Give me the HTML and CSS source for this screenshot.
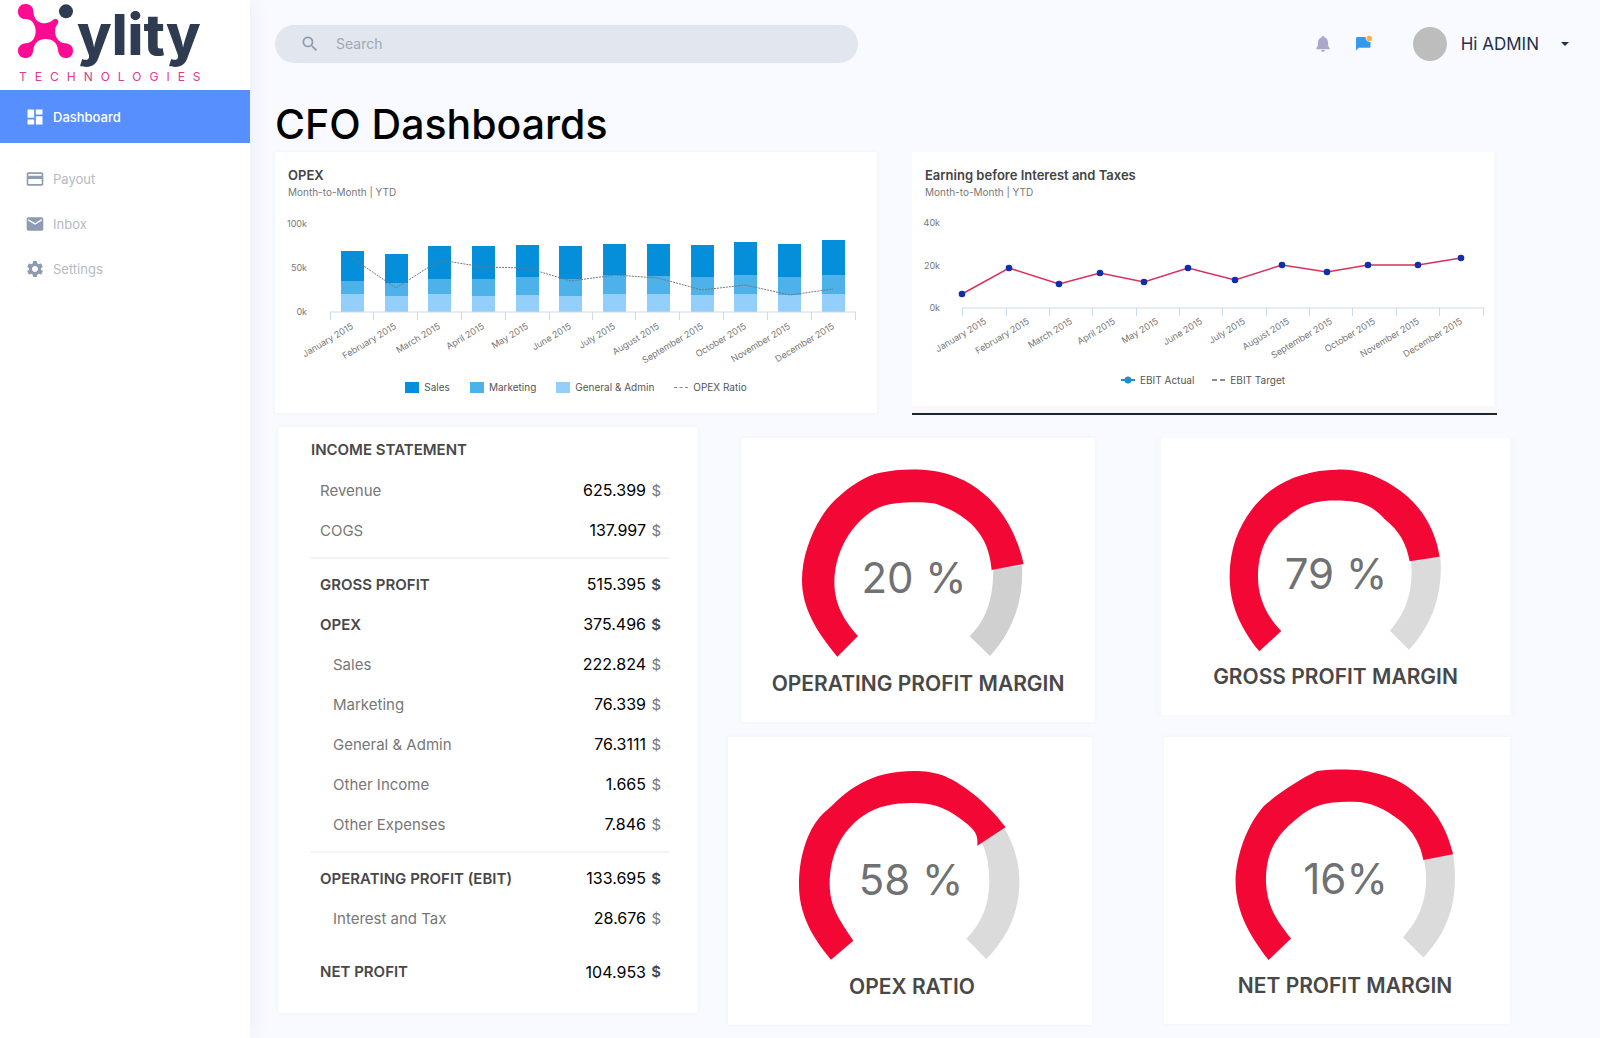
FILE: index.html
```html
<!DOCTYPE html>
<html lang="en">
<head>
<meta charset="utf-8">
<meta name="viewport" content="width=device-width, initial-scale=1">
<title>CFO Dashboards</title>
<link rel="stylesheet" href="styles.css">
</head>
<body>
<div class="app">
  <aside class="sidebar">
    <a class="logo" href="#" aria-label="Xylity Technologies">
      <svg width="250" height="90" viewBox="0 0 250 90">
        <g transform="scale(.3333)">
          <path fill="#ff0a93" d="M100 35C100 18 88 12 76 12C62 12 54 22 54 35C54 50 64 57 78 57C92 57 105 68 107 92C107 115 95 128 78 130C62 132 54 140 54 152C54 166 64 174 78 174C90 174 98 166 100 150C102 130 115 117 137 117C160 117 172 130 174 150C176 166 184 174 197 174C210 174 219 166 219 152C219 138 210 132 196 130C175 128 165 110 165 92C165 82 170 76 174 70C178 62 170 54 162 58C155 63 150 68 137 70C115 70 102 58 100 35Z"/>
          <circle cx="198" cy="34" r="21" fill="#2f3b50"/>
        </g>
        <text class="logo-name" x="77" y="55">ylity</text>
        <text class="logo-tag" x="19" y="81">TECHNOLOGIES</text>
      </svg>
    </a>
    <nav class="nav">
      <a class="nav-item active" href="#"><svg viewBox="0 0 24 24"><path d="M3 13h8V3H3v10zm0 8h8v-6H3v6zm10 0h8V11h-8v10zm0-18v6h8V3h-8z"/></svg>Dashboard</a>
      <a class="nav-item" href="#"><svg viewBox="0 0 24 24"><path d="M20 4H4c-1.11 0-1.99.89-1.99 2L2 18c0 1.11.89 2 2 2h16c1.11 0 2-.89 2-2V6c0-1.11-.89-2-2-2zm0 14H4v-6h16v6zm0-10H4V6h16v2z"/></svg>Payout</a>
      <a class="nav-item" href="#"><svg viewBox="0 0 24 24"><path d="M20 4H4c-1.1 0-1.99.9-1.99 2L2 18c0 1.100.9 2 2 2h16c1.100 0 2-.9 2-2V6c0-1.100-.9-2-2-2zm0 4l-8 5-8-5V6l8 5 8-5v2z"/></svg>Inbox</a>
      <a class="nav-item" href="#"><svg viewBox="0 0 24 24"><path d="M19.140 12.940c.04-.3.06-.61.06-.94 0-.32-.02-.64-.07-.94l2.030-1.580c.18-.14.23-.41.12-.61l-1.920-3.320c-.12-.22-.37-.29-.59-.22l-2.390.96c-.5-.38-1.030-.7-1.620-.94l-.36-2.540c-.04-.24-.24-.41-.48-.41h-3.840c-.24 0-.43.17-.47.41l-.36 2.540c-.59.24-1.130.57-1.620.94l-2.390-.96c-.22-.08-.47 0-.59.22L2.740 8.870c-.12.21-.08.47.12.61l2.030 1.580c-.05.3-.09.63-.09.94s.02.64.07.94l-2.030 1.580c-.18.14-.23.41-.12.61l1.920 3.320c.12.22.37.29.59.22l2.390-.96c.5.38 1.030.7 1.620.94l.36 2.540c.05.24.24.41.48.41h3.840c.24 0 .44-.17.47-.41l.36-2.540c.59-.24 1.130-.56 1.620-.94l2.390.96c.22.08.47 0 .59-.22l1.920-3.320c.12-.22.07-.47-.12-.61l-2.010-1.580zM12 15.600c-1.980 0-3.600-1.620-3.600-3.600s1.620-3.600 3.600-3.600 3.600 1.620 3.600 3.600-1.620 3.600-3.600 3.600z"/></svg>Settings</a>
    </nav>
  </aside>

  <main class="main">
    <header class="topbar">
      <label class="search">
        <svg viewBox="0 0 24 24"><path d="M15.500 14h-.79l-.28-.27A6.471 6.471 0 0 0 16 9.500 6.500 6.500 0 1 0 9.500 16c1.610 0 3.090-.59 4.230-1.570l.27.28v.79l5 4.990L20.490 19l-4.990-5zm-6 0C7.010 14 5 11.990 5 9.500S7.010 5 9.500 5 14 7.010 14 9.500 11.990 14 9.500 14z"/></svg>
        <input type="search" placeholder="Search" aria-label="Search">
      </label>
      <div class="actions">
        <button class="icon-btn" type="button" aria-label="Notifications"><svg viewBox="0 0 20 20"><path fill="#a9a8cc" d="M10 2c.8 0 1.300.5 1.300 1.200C13.800 3.800 15 5.900 15 8.500c0 3.500.6 4.500 1.700 5.600v1.100H3.300v-1.100C4.400 13 5 12 5 8.500c0-2.600 1.200-4.700 3.700-5.300C8.700 2.500 9.200 2 10 2zM8.200 16h3.600c0 1.200-.8 2-1.800 2s-1.800-.8-1.800-2z"/></svg></button>
        <button class="icon-btn" type="button" aria-label="Messages"><svg viewBox="0 0 20 20"><path fill="#339aed" d="M3.500 3h8.100c-.3 2.900 1.500 4.900 4.900 5v4.500c0 .8-.5 1.300-1.300 1.300H4.800L2 16.500V4.500C2 3.600 2.600 3 3.500 3z"/><circle cx="15.200" cy="4.500" r="2.700" fill="#f6ad4b"/></svg></button>
        <button class="user" type="button"><span class="avatar"></span><span>Hi ADMIN</span><span class="caret"></span></button>
      </div>
    </header>

    <h1>CFO Dashboards</h1>

    <div class="charts">
      <section class="card chart">
        <h2>OPEX</h2>
        <p class="sub">Month-to-Month | YTD</p>
        <svg class="plot" viewBox="0 0 602 170" role="img" aria-label="OPEX by month">
          <g class="ticks" text-anchor="end">
            <text x="32" y="27">100k</text><text x="32" y="71">50k</text><text x="32" y="115">0k</text>
          </g>
          <path fill="#058ed9" d="M66 112V51h23V112zM110 112V54h23V112zM153 112V46h23V112zM197 112V46h23V112zM241 112V45h23V112zM284 112V46h23V112zM328 112V44h23V112zM372 112V44h23V112zM416 112V45h23V112zM459 112V42h23V112zM503 112V44h23V112zM547 112V40h23V112z"/>
          <path fill="#4db1ea" d="M66 112V81h23V112zM110 112V83h23V112zM153 112V79h23V112zM197 112V79h23V112zM241 112V77h23V112zM284 112V79h23V112zM328 112V75h23V112zM372 112V76h23V112zM416 112V77h23V112zM459 112V75h23V112zM503 112V77h23V112zM547 112V75h23V112z"/>
          <path fill="#94cefa" d="M66 112V94h23V112zM110 112V96h23V112zM153 112V94h23V112zM197 112V96h23V112zM241 112V95h23V112zM284 112V96h23V112zM328 112V94h23V112zM372 112V94h23V112zM416 112V95h23V112zM459 112V94h23V112zM503 112V95h23V112zM547 112V94h23V112z"/>
          <path class="axis" d="M55 112H581M55.500 112v8M98.500 112v8M142.500 112v8M186.500 112v8M230.500 112v8M274.500 112v8M317.500 112v8M360.500 112v8M404.500 112v8M448.500 112v8M492.500 112v8M536.500 112v8M580.500 112v8"/>
          <polyline class="ratio" points="77,58 121,88 165,60 208,67 252,68 296,81 340,75 383,78 427,90 470,85 515,95 558,89"/>
          <g class="ticks" text-anchor="end">
            <text transform="translate(79 128) rotate(-31)">January 2015</text>
            <text transform="translate(122 128) rotate(-31)">February 2015</text>
            <text transform="translate(166 128) rotate(-31)">March 2015</text>
            <text transform="translate(210 128) rotate(-31)">April 2015</text>
            <text transform="translate(254 128) rotate(-31)">May 2015</text>
            <text transform="translate(297 128) rotate(-31)">June 2015</text>
            <text transform="translate(341 128) rotate(-31)">July 2015</text>
            <text transform="translate(385 128) rotate(-31)">August 2015</text>
            <text transform="translate(429 128) rotate(-31)">September 2015</text>
            <text transform="translate(472 128) rotate(-31)">October 2015</text>
            <text transform="translate(516 128) rotate(-31)">November 2015</text>
            <text transform="translate(560 128) rotate(-31)">December 2015</text>
          </g>
        </svg>
        <ul class="legend">
          <li><span class="swatch sales"></span>Sales</li>
          <li><span class="swatch marketing"></span>Marketing</li>
          <li><span class="swatch general"></span>General &amp; Admin</li>
          <li><span class="dots"></span>OPEX Ratio</li>
        </ul>
      </section>

      <div class="ebit">
        <section class="card chart">
          <h2>Earning before Interest and Taxes</h2>
          <p class="sub">Month-to-Month | YTD</p>
          <svg class="plot" viewBox="0 0 582 160" role="img" aria-label="EBIT by month">
            <g class="ticks" text-anchor="end">
              <text x="28" y="26">40k</text><text x="28" y="69">20k</text><text x="28" y="111">0k</text>
            </g>
            <path class="axis" d="M50 108H572M50.500 108v8M94.500 108v8M137.500 108v8M180.500 108v8M224.500 108v8M267.500 108v8M310.500 108v8M354.500 108v8M397.500 108v8M440.500 108v8M484.500 108v8M527.500 108v8M571.500 108v8"/>
            <polyline fill="none" stroke="#d8305a" stroke-width="1.500" points="50,94 97,68 147,84 188,73 232,82 276,68 323,80 370,65 415,72 456,65 506,65 549,58"/>
            <g fill="#0d2fae">
              <circle cx="50" cy="94" r="3.300"/><circle cx="97" cy="68" r="3.300"/><circle cx="147" cy="84" r="3.300"/><circle cx="188" cy="73" r="3.300"/><circle cx="232" cy="82" r="3.300"/><circle cx="276" cy="68" r="3.300"/><circle cx="323" cy="80" r="3.300"/><circle cx="370" cy="65" r="3.300"/><circle cx="415" cy="72" r="3.300"/><circle cx="456" cy="65" r="3.300"/><circle cx="506" cy="65" r="3.300"/><circle cx="549" cy="58" r="3.300"/>
            </g>
            <g class="ticks" text-anchor="end">
              <text transform="translate(75 123) rotate(-31)">January 2015</text>
              <text transform="translate(118 123) rotate(-31)">February 2015</text>
              <text transform="translate(161 123) rotate(-31)">March 2015</text>
              <text transform="translate(204 123) rotate(-31)">April 2015</text>
              <text transform="translate(247 123) rotate(-31)">May 2015</text>
              <text transform="translate(291 123) rotate(-31)">June 2015</text>
              <text transform="translate(334 123) rotate(-31)">July 2015</text>
              <text transform="translate(378 123) rotate(-31)">August 2015</text>
              <text transform="translate(421 123) rotate(-31)">September 2015</text>
              <text transform="translate(464 123) rotate(-31)">October 2015</text>
              <text transform="translate(508 123) rotate(-31)">November 2015</text>
              <text transform="translate(551 123) rotate(-31)">December 2015</text>
            </g>
          </svg>
          <ul class="legend">
            <li><svg width="14" height="8" viewBox="0 0 14 8"><path stroke="#1c8fd0" stroke-width="2" d="M0 4h14"/><circle cx="7" cy="4" r="3.500" fill="#1c8fd0"/></svg>EBIT Actual</li>
            <li><svg width="13" height="8" viewBox="0 0 13 8"><path stroke="#666" stroke-width="1.500" d="M0 4h5M8 4h5"/></svg>EBIT Target</li>
          </ul>
        </section>
      </div>
    </div>

    <div class="details">
      <section class="card income">
        <h2>INCOME STATEMENT</h2>
        <table>
          <tbody>
            <tr><th scope="row">Revenue</th><td>625.399</td><td class="cur">$</td></tr>
            <tr><th scope="row">COGS</th><td>137.997</td><td class="cur">$</td></tr>
          </tbody>
          <tbody class="ruled">
            <tr class="total"><th scope="row">GROSS PROFIT</th><td>515.395</td><td class="cur">$</td></tr>
            <tr class="total"><th scope="row">OPEX</th><td>375.496</td><td class="cur">$</td></tr>
            <tr class="item"><th scope="row">Sales</th><td>222.824</td><td class="cur">$</td></tr>
            <tr class="item"><th scope="row">Marketing</th><td>76.339</td><td class="cur">$</td></tr>
            <tr class="item"><th scope="row">General &amp; Admin</th><td>76.3111</td><td class="cur">$</td></tr>
            <tr class="item"><th scope="row">Other Income</th><td>1.665</td><td class="cur">$</td></tr>
            <tr class="item"><th scope="row">Other Expenses</th><td>7.846</td><td class="cur">$</td></tr>
          </tbody>
          <tbody class="ruled">
            <tr class="total"><th scope="row">OPERATING PROFIT (EBIT)</th><td>133.695</td><td class="cur">$</td></tr>
            <tr class="item"><th scope="row">Interest and Tax</th><td>28.676</td><td class="cur">$</td></tr>
          </tbody>
          <tbody class="net">
            <tr class="total"><th scope="row">NET PROFIT</th><td>104.953</td><td class="cur">$</td></tr>
          </tbody>
        </table>
      </section>

      <div class="gauges">
        <figure class="card gauge operating">
          <svg viewBox="0 0 354 232">
            <g transform="scale(.3333) translate(-63 -39)">
              <path fill="#d0d0d0" d="M820 433L906 421C912 520 880 620 810 693L749 634C800 585 820 520 820 433Z"/>
              <path fill="#f30735" d="M352 695C290 620 246 550 246 465C246 400 270 330 305 275Q320 250 345 225C390 182 440 150 480 143C540 130 630 128 690 149C800 185 880 280 911 417L815 435C808 350 770 280 650 237C620 230 540 230 500 240C430 255 345 350 343 470C343 540 375 590 414 633Z"/>
            </g>
            <text x="173" y="155">20 %</text>
          </svg>
          <figcaption>OPERATING PROFIT MARGIN</figcaption>
        </figure>
        <figure class="card gauge gross">
          <svg viewBox="0 0 349 225">
            <g transform="scale(.3333) translate(-63 -41)">
              <path fill="#dbdbdb" d="M813 408L901 398C910 500 880 600 807 676L750 619C800 565 822 490 813 408Z"/>
              <path fill="#f30735" d="M358 681C300 610 269 540 269 455C269 350 315 260 390 200C450 155 520 137 590 136C650 134 700 148 760 185C840 235 885 310 899 397L809 411C800 360 780 320 733 283C700 245 660 231 620 230C540 225 490 235 440 280C380 315 352 390 354 460C354 520 380 575 424 620Z"/>
            </g>
            <text x="175" y="151">79 %</text>
          </svg>
          <figcaption>GROSS PROFIT MARGIN</figcaption>
        </figure>
        <figure class="card gauge ratio-card">
          <svg viewBox="0 0 364 236">
            <g transform="scale(.3333) translate(-24 -36)">
              <path fill="#dbdbdb" d="M785 353L855 312C885 365 900 420 898 480C895 570 860 640 799 702L739 641C790 590 808 530 808 470C808 425 802 385 785 353Z"/>
              <path fill="#f30735" d="M333 704C275 635 237 565 237 480C237 390 265 305 315 260Q330 248 345 233C400 180 470 138 580 138C650 138 690 155 740 192C790 228 825 265 857 307L772 362C775 330 765 315 735 292C690 255 650 237 600 235C540 232 480 238 430 272C365 315 330 390 329 475C329 545 355 580 400 647Z"/>
            </g>
            <text x="183" y="158">58 %</text>
          </svg>
          <figcaption>OPEX RATIO</figcaption>
        </figure>
        <figure class="card gauge net-card">
          <svg viewBox="0 0 345 234">
            <g transform="scale(.3333) translate(-72 -36)">
              <path fill="#dbdbdb" d="M849 402L937 387C955 510 930 610 848 696L787 635C850 570 868 480 849 402Z"/>
              <path fill="#f30735" d="M385 703C320 620 286 550 286 465C288 390 320 300 370 243C400 215 480 160 530 138C600 130 660 133 700 143C750 155 790 172 820 200C880 250 915 300 937 387L848 404C840 360 820 320 780 287C730 250 690 230 640 230C570 228 520 235 470 280C400 335 376 390 377 470C380 540 405 580 452 639Z"/>
            </g>
            <text x="181" y="157">16%</text>
          </svg>
          <figcaption>NET PROFIT MARGIN</figcaption>
        </figure>
      </div>
    </div>
  </main>
</div>
</body>
</html>
```
FILE: styles.css
```css
* { box-sizing: border-box; }

body {
  margin: 0;
  background: #f8faff;
  color: #000;
  font-family: Inter, "Noto Sans", sans-serif;
}

h1, h2, p, ul, figure { margin: 0; padding: 0; }
button { border: 0; background: none; padding: 0; font: inherit; color: inherit; cursor: pointer; }

.app { display: flex; min-height: 100vh; }

/* Sidebar */
.sidebar {
  flex: 0 0 250px;
  background: #fff;
  box-shadow: 0 0 20px #e9ebf8;
}
.logo { display: block; height: 90px; }
.logo svg { display: block; overflow: visible; }
.logo-name { font-size: 56px; font-weight: 800; fill: #2f3b50; }
.logo-tag { font-size: 12px; letter-spacing: 8px; fill: #e0398f; }

.nav-item {
  display: flex;
  align-items: center;
  gap: 8px;
  height: 45px;
  padding-left: 25px;
  font-size: 13px;
  color: #b4bac3;
  text-decoration: none;
}
.nav-item svg { width: 20px; height: 20px; fill: #8f9bb0; }
.nav-item.active {
  height: 53px;
  margin-bottom: 13px;
  background: #588ffe;
  color: #fff;
  font-weight: 500;
}
.nav-item.active svg { fill: #fff; }

/* Top bar */
.main { flex: 1; min-width: 0; padding: 25px 0 14px 25px; }
.topbar { display: flex; align-items: center; padding-right: 31px; }
.search {
  display: flex;
  align-items: center;
  gap: 16px;
  flex: 0 1 583px;
  height: 38px;
  padding: 0 25px;
  border-radius: 19px;
  background: #e1e6ef;
}
.search svg { width: 20px; height: 20px; fill: #8f9bad; }
.search input {
  flex: 1;
  min-width: 0;
  padding: 0;
  border: 0;
  outline: 0;
  background: none;
  font: 14px/20px Inter, sans-serif;
}
.search input::placeholder { color: #a0a7b5; opacity: 1; }
.actions { display: flex; align-items: center; gap: 21px; margin-left: auto; }
.icon-btn { width: 20px; height: 20px; }
.icon-btn svg { display: block; width: 20px; height: 20px; }
.user { display: flex; align-items: center; margin-left: 18px; font-size: 17px; color: #22304b; }
.avatar { width: 34px; height: 34px; margin-right: 14px; border-radius: 50%; background: #bdbdbd; }
.caret {
  margin-left: 22px;
  border: 4px solid transparent;
  border-top-color: #22304b;
  border-bottom: 0;
}

h1 { margin-top: 33px; font-size: 41px; line-height: 56px; font-weight: 500; }

/* Cards and charts */
.card { background: #fff; box-shadow: 0 0 4px #eef0f5; }
.charts {
  display: grid;
  grid-template-columns: 602fr 585fr;
  align-items: start;
  gap: 35px;
  padding-right: 103px;
}
.chart { padding: 13px 0 18px; }
.chart h2 { padding-left: 13px; font-size: 13px; line-height: 20px; font-weight: 600; color: #444; }
.sub { padding-left: 13px; font-size: 10px; line-height: 15px; color: #777; }
.plot { display: block; width: 100%; height: auto; overflow: visible; }
.ticks { font-size: 9px; fill: #777; }
.axis { fill: none; stroke: #c9dbe8; }
.ratio { fill: none; stroke: #777; stroke-dasharray: 2 1; }
.ebit { padding: 0 3px 7px 0; background: #f8f8f8; border-bottom: 2px solid #1d242c; }
.ebit .card { padding-bottom: 18px; box-shadow: none; }

.legend {
  display: flex;
  justify-content: center;
  gap: 20px;
  margin-top: 9px;
  list-style: none;
  font-size: 10px;
  line-height: 16px;
  color: #555;
}
.ebit .legend { gap: 18px; margin-top: 12px; }
.legend li { display: flex; align-items: center; gap: 5px; }
.swatch { width: 14px; height: 11px; }
.sales { background: #058ed9; }
.marketing { background: #4db1ea; }
.general { background: #94cefa; }
.dots { width: 14px; border-top: 1px dashed #888; }

/* Income statement */
.details {
  display: grid;
  grid-template-columns: 420fr 782fr;
  align-items: start;
  gap: 30px;
  margin-top: 12px;
  padding: 0 90px 0 3px;
}
.income { padding: 13px 29px 14px 33px; }
.income h2 { font-size: 15px; line-height: 20px; font-weight: 600; color: #484848; }
.income table { width: 100%; margin-top: 10px; border-collapse: separate; border-spacing: 0; }
.income th, .income td { height: 40px; padding: 0; text-align: right; font-size: 16px; font-weight: 400; }
.income th { padding-left: 9px; text-align: left; font-size: 15px; color: #777; }
.income .item th { padding-left: 22px; }
.income .total th { font-weight: 600; color: #484848; }
.income .cur { width: 23px; padding-right: 8px; font-size: 15px; color: #777; }
.income .total .cur { font-weight: 600; color: #484848; }
.income tr:last-child > * { height: 47px; padding-bottom: 7px; }
.income .ruled tr:first-child > * { height: 47px; padding-top: 5px; border-top: 2px solid #f3f3f3; }
.income .net tr > * { height: 54px; padding-top: 6px; }

/* Gauges */
.gauges {
  display: grid;
  grid-template-columns: 367fr 349fr;
  align-items: start;
  gap: 15px 66px;
  padding-top: 11px;
}
.gauge { padding-bottom: 24px; }
.gauge svg { display: block; width: 100%; height: auto; }
.gauge text { font-size: 42px; text-anchor: middle; fill: #707173; }
.gauge figcaption { font-size: 21px; line-height: 28px; font-weight: 600; text-align: center; color: #484848; }
.operating { margin-left: 13px; }
.gross { box-shadow: 6px 0 #f7f8fa, -6px 0 #f7f8fa; }
.ratio-card { margin-right: 3px; }
.ratio-card figcaption { padding-left: 4px; }
.net-card { margin-left: 3px; }
.net-card figcaption { padding-left: 16px; }
```
